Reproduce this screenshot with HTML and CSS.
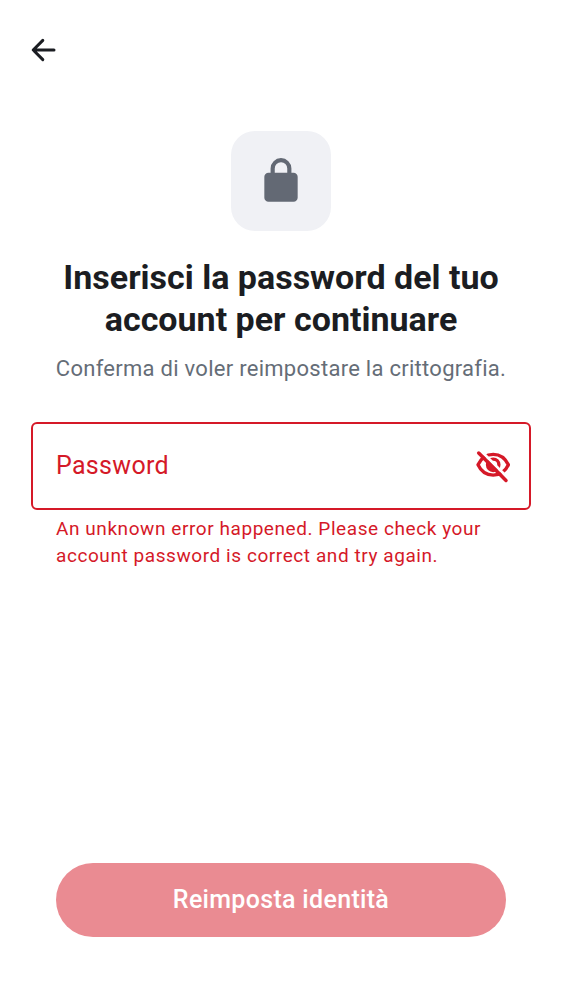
FILE: index.html
```html
<!DOCTYPE html>
<html lang="it">
<head>
<meta charset="utf-8">
<meta name="viewport" content="width=device-width, initial-scale=1">
<title>Reimposta identità</title>
<link rel="stylesheet" href="styles.css">
</head>
<body>
<form class="screen">
  <header class="topbar">
    <button class="icon-button" type="button" aria-label="Indietro">
      <svg class="back-icon" viewBox="0 0 30 30" aria-hidden="true"><path d="M26 15H5.500M14.800 5.400 5.200 15l9.600 9.600" fill="none" stroke="currentColor" stroke-width="3" stroke-linecap="round" stroke-linejoin="round"/></svg>
    </button>
  </header>
  <main class="content">
    <div class="badge">
      <svg class="lock-icon" viewBox="0 0 24 24" aria-hidden="true"><path fill="currentColor" d="M6 22q-.825 0-1.412-.587A1.930 1.930 0 0 1 4 20V10q0-.825.588-1.412A1.930 1.930 0 0 1 6 8h1V6q0-2.075 1.463-3.537Q9.926 1 12 1t3.537 1.463T17 6v2h1q.825 0 1.413.588Q20 9.175 20 10v10q0 .824-.587 1.413A1.930 1.930 0 0 1 18 22zM9 8h6V6q0-1.250-.875-2.125A2.900 2.900 0 0 0 12 3q-1.250 0-2.125.875A2.900 2.900 0 0 0 9 6z"/></svg>
    </div>
    <h1 class="title">Inserisci la password del tuo account per continuare</h1>
    <p class="subtitle">Conferma di voler reimpostare la crittografia.</p>
    <div class="field">
      <input class="field-input" id="password" type="password" placeholder="Password" aria-label="Password" aria-invalid="true" aria-describedby="password-error">
      <button class="icon-button" type="button" aria-label="Mostra password">
        <svg class="eye-icon" viewBox="0 0 36 36" aria-hidden="true">
          <g fill="none" stroke="currentColor" stroke-width="3.300">
            <path d="M3 16.800C6 10.300 11.500 6.300 18.200 6.300s12.200 4 15.200 10.500c-3 6.500-8.500 10.300-15.200 10.300S6 23.300 3 16.800z" stroke-linejoin="round"/>
            <circle cx="18.200" cy="16.800" r="5.700"/>
            <path d="M14 12.600a5.900 5.900 0 0 0 8.400 8.400z" fill="currentColor" stroke="none"/>
          </g>
          <path d="M5.500 2.500 34.500 31.500" stroke="#fff" stroke-width="3"/>
          <path d="M3.700 5.100 31 32.400" stroke="currentColor" stroke-width="3.500" stroke-linecap="round"/>
        </svg>
      </button>
    </div>
    <p class="field-error" id="password-error">An unknown error happened. Please check your account password is correct and try again.</p>
  </main>
  <footer class="actions">
    <button class="primary" type="submit" disabled>Reimposta identità</button>
  </footer>
</form>
</body>
</html>
```
FILE: styles.css
```css
* { box-sizing: border-box; }
body {
  margin: 0;
  background: #fff;
  color: #1b1d22;
  font-family: Roboto, sans-serif;
}
.screen {
  min-height: 100vh;
  display: flex;
  flex-direction: column;
}
.topbar { display: flex; padding: 35px 28px 0; }
.icon-button {
  display: flex;
  padding: 0;
  border: 0;
  background: none;
  color: inherit;
}
.back-icon { width: 30px; height: 30px; }
.content {
  flex: 1;
  display: flex;
  flex-direction: column;
  align-items: center;
  padding: 66px 31px 0;
}
.badge {
  display: flex;
  align-items: center;
  justify-content: center;
  width: 100px;
  height: 100px;
  border-radius: 24px;
  background: #f0f1f5;
  color: #636974;
}
.lock-icon { width: 50px; height: 50px; }
.title {
  margin: 25px 0 0;
  padding: 0 25px;
  font-size: 34px;
  line-height: 42px;
  font-weight: 700;
  text-align: center;
}
.subtitle {
  margin: 15px 0 0;
  font-size: 22px;
  line-height: 28px;
  letter-spacing: 0.0125em;
  text-align: center;
  color: #656d77;
}
.field {
  display: flex;
  align-items: center;
  width: 100%;
  margin-top: 39px;
  height: 88px;
  padding: 0 18px 0 23px;
  border: 2px solid #d51928;
  border-radius: 6px;
  color: #d51928;
}
.field-input {
  flex: 1;
  min-width: 0;
  padding: 0;
  border: 0;
  outline: 0;
  background: none;
  color: inherit;
  font: 25px/36px Roboto, sans-serif;
  letter-spacing: 0.0125em;
}
.field-input::placeholder { color: inherit; opacity: 1; }
.eye-icon { width: 36px; height: 36px; }
.field-error {
  align-self: stretch;
  margin: 5px 0 0;
  padding: 0 25px;
  font-size: 19px;
  line-height: 27px;
  letter-spacing: 0.03em;
  color: #d51928;
}
.actions { padding: 24px 56px 63px; }
.primary {
  display: block;
  width: 100%;
  padding: 19px 24px;
  border: 0;
  border-radius: 38px;
  background: #ea8b92;
  color: #fff;
  font: 500 25px/36px Roboto, sans-serif;
  letter-spacing: 0.0125em;
}
```
